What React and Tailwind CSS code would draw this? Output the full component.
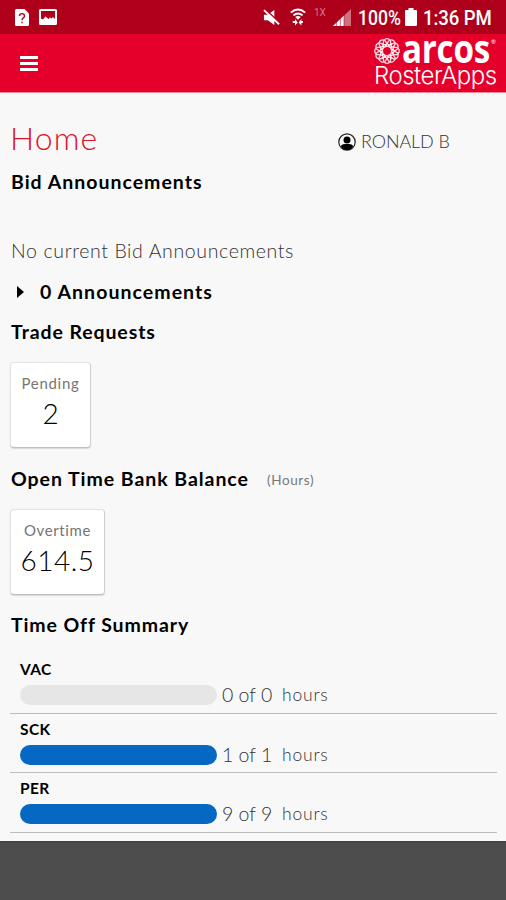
import { useState } from 'react'
import clsx from 'clsx'

const balances = [
  { code: 'VAC', used: 0, total: 0 },
  { code: 'SCK', used: 1, total: 1 },
  { code: 'PER', used: 9, total: 9 },
]

// outer petals of the logo wheel
const petals = [0, 30, 60, 90, 120, 150, 180, 210, 240, 270, 300, 330]

function StatusBar() {
  return (
    <div className="flex h-[34px] shrink-0 items-center bg-[#ae001a] text-white font-['Roboto','Liberation_Sans',sans-serif]">
      <svg className="ml-[15px] h-[17px] w-[14px]" viewBox="0 0 14 17">
        <path fill="#fff" d="M1.5 0H9.5L14 4.5V15.5Q14 17 12.5 17H1.5Q0 17 0 15.5V1.5Q0 0 1.5 0Z" />
        <path fill="none" stroke="#ae001a" strokeWidth="1.4" d="M4.5 7Q4.5 4.6 7 4.6T9.5 7Q9.5 8.3 8 9.2Q7 9.9 7 11.3M7 12.7V14.3" />
      </svg>
      <svg className="ml-[10px] h-[16px] w-[18px]" viewBox="0 0 18 16">
        <rect width="18" height="16" rx="1.5" fill="#fff" />
        <path fill="#ae001a" d="M2 2H16V10L14 8L12.5 9.5L11 8.5L9.5 10L6.5 7.5L4 10.5L2 9.5Z" />
      </svg>

      <div className="ml-auto flex items-center">
        <svg className="h-[17px] w-[17px]" viewBox="0 0 18 18">
          <path fill="#fff" d="M1 6H5L12 1V17L5 12H1Z" />
          <path stroke="#ae001a" strokeWidth="1.6" d="M2.5 .5L18 14.5" />
          <path stroke="#fff" strokeWidth="2" d="M1 1.2L17 16.2" />
        </svg>
        <svg className="ml-[10px] h-[18px] w-[16px]" viewBox="0 0 16 18" fill="none" stroke="#fff" strokeWidth="1.9">
          <path d="M.8 4.6Q8-1.8 15.2 4.6M3.4 7.4Q8 3.4 12.6 7.4" />
          <path fill="#fff" stroke="none" d="M5.2 9Q8 6.8 10.8 9L8 11.8ZM2.7 13H5V11L7.8 14.5L5 17.5V15H2.7ZM13 13V15H11.4V17.5L8.6 14.5L11.4 11V13Z" />
        </svg>
        <span className="ml-[8px] w-[12px] -translate-y-[4px] text-[10px] leading-none text-[#d87583]">1X</span>
        <svg className="ml-[7px] h-[17px] w-[18px]" viewBox="0 0 18 17">
          <path fill="#d0707d" d="M18 0V17H0Z" />
          <path fill="#fff" d="M11 6.6V17H0Z" />
          <path stroke="#ae001a" strokeWidth=".6" d="M3.6 10V17M7.3 7V17M11 4V17" />
        </svg>
        <span className="ml-[7px] w-[46px] origin-left translate-y-[1px] scale-x-[0.88] whitespace-nowrap text-[20px] leading-none font-medium">100%</span>
        <svg className="ml-[1px] h-[18px] w-[12px]" viewBox="0 0 12 18">
          <path fill="#fff" d="M3.5 0H8.5V2H11Q12 2 12 3V17Q12 18 11 18H1Q0 18 0 17V3Q0 2 1 2H3.5Z" />
        </svg>
        <span className="mr-[13px] ml-[6px] w-[70px] origin-left translate-y-[1px] scale-x-[0.93] whitespace-nowrap text-[20px] leading-none font-medium tracking-[-0.1px]">1:36 PM</span>
      </div>
    </div>
  )
}

function Logo() {
  return (
    <div className="mr-[8px] w-[124px] text-white">
      <div className="flex h-[26px] items-center">
        <svg className="h-[26px] w-[26px] shrink-0" viewBox="-13 -13 26 26" fill="none" stroke="#fff" strokeOpacity=".85">
          {petals.map((a) => (
            <g key={a} transform={`rotate(${a})`}>
              <path strokeWidth="1.3" d="M-2.6-11.2Q0-13.4 2.6-11.2L0-7.6Z" />
              <path strokeWidth="1.3" d="M0-7.6L2.6-5.2L0-4.4L-1.6-6Z" />
            </g>
          ))}
        </svg>
        <span className="ml-[2px] w-[88px] origin-left -translate-y-[3px] scale-x-[0.84] whitespace-nowrap font-['Open_Sans','Noto_Sans',sans-serif] text-[39.5px] leading-[26px] font-bold tracking-[-0.3px]">
          arcos
        </span>
        <span className="ml-[1px] -translate-y-[9px] text-[6px] leading-none">®</span>
      </div>
      <div className="whitespace-nowrap font-['Inter','Liberation_Sans',sans-serif] text-[24px] leading-[24px] font-light tracking-[-0.5px]">
        RosterApps
      </div>
    </div>
  )
}

function Header() {
  return (
    <header className="flex h-[59px] shrink-0 items-center justify-between border-b border-[#f28a9a] bg-[#e4002b]">
      <button className="ml-[20px] flex w-[18px] flex-col gap-[3px]" aria-label="Menu">
        <span className="h-[3px] bg-white" />
        <span className="h-[3px] bg-white" />
        <span className="h-[3px] bg-white" />
      </button>
      <Logo />
    </header>
  )
}

function StatCard({ label, value, className, labelClass, valueClass }) {
  return (
    <div className={clsx('flex h-[86px] flex-col items-center rounded-[4px] border border-[#e2e2e2] border-r-[#cfcfcf] border-b-[#bdbdbd] bg-white pt-[9px] shadow-[0_1px_1px_#d8d8d8]', className)}>
      <span className={clsx('text-[15px] leading-[22px] whitespace-nowrap text-[#757575]', labelClass)}>{label}</span>
      <span className={clsx('text-[28px] leading-[38px] font-light whitespace-nowrap text-black', valueClass)}>{value}</span>
    </div>
  )
}

function BalanceRow({ code, used, total }) {
  return (
    <div className="h-[59.5px] border-b border-[#bcbcbc] pt-[7px] pl-[10px]">
      <div className="text-[15.5px] leading-[17px] font-bold tracking-[0.4px]">{code}</div>
      <div className="mt-[7px] flex h-[20px] items-center">
        <div className={clsx('h-[20px] w-[197px] rounded-full', total > 0 ? 'bg-[#0568c2]' : 'bg-[#e6e6e6]')} />
        <span className="ml-[5px] w-[60px] text-[19.5px] leading-[20px] font-light whitespace-nowrap text-[#333]">
          {used} of {total}
        </span>
        <span className="text-[17.5px] leading-[22px] font-light tracking-[0.8px] text-[#333]">hours</span>
      </div>
    </div>
  )
}

export default function App() {
  const [open, setOpen] = useState(false)

  return (
    <div className="flex h-[900px] w-[506px] flex-col overflow-hidden bg-[#f8f8f8] font-['Lato','Open_Sans',sans-serif] text-black">
      <StatusBar />
      <Header />

      <main className="h-[748px] shrink-0 pt-5 pr-[9px] pl-[10px]">
        {/* Title and user */}
        <div className="flex h-[49px] items-center">
          <h1 className="w-[328px] text-[32px] font-light tracking-[1.1px] text-[#dc1428]">Home</h1>
          <svg className="mt-[8px] h-[18px] w-[18px]" viewBox="0 0 18 18">
            <circle cx="9" cy="9" r="8.2" fill="none" stroke="#222" strokeWidth="1.2" />
            <circle cx="9" cy="6.9" r="3.5" fill="#000" />
            <path fill="#000" d="M2.8 13Q4 11 7 11H11Q14 11 15.2 13Q13 16.9 9 16.9T2.8 13Z" />
          </svg>
          <span className="mt-[8px] ml-[5px] text-[18px] font-light tracking-[-0.1px] whitespace-nowrap text-[#333]">RONALD B</span>
        </div>

        <h2 className="pl-px text-[19.5px] leading-[40px] font-bold tracking-[1px]">Bid Announcements</h2>
        <p className="mt-[29px] pl-px text-[19.5px] leading-[40px] font-light tracking-[0.63px] text-[#333]">No current Bid Announcements</p>

        <button className="flex h-[42px] items-center" onClick={() => setOpen(!open)}>
          <svg className={clsx('ml-[7px] h-[12px] w-[7px]', open && 'rotate-90')} viewBox="0 0 7 12">
            <path d="M0 0L7 6L0 12Z" />
          </svg>
          <span className="ml-[16px] text-[19.5px] font-bold tracking-[1.05px]">0 Announcements</span>
        </button>

        <h2 className="mt-px pl-px text-[19.5px] leading-[36px] font-bold tracking-[0.9px]">Trade Requests</h2>
        <StatCard label="Pending" value="2" className="mt-[12px] w-[81px]" labelClass="tracking-[0.7px]" />

        <div className="flex h-[61px] items-center">
          <h2 className="w-[257px] pl-px text-[19.5px] font-bold tracking-[0.95px] whitespace-nowrap">Open Time Bank Balance</h2>
          <span className="mt-[4px] text-[13.5px] tracking-[0.6px] text-[#777]">(Hours)</span>
        </div>
        <StatCard label="Overtime" value="614.5" className="w-[95px]" labelClass="tracking-[0.6px]" valueClass="tracking-[0.5px]" />

        <h2 className="pl-px text-[19.5px] leading-[59px] font-bold tracking-[0.9px]">Time Off Summary</h2>
        {balances.map((b) => (
          <BalanceRow key={b.code} {...b} />
        ))}
      </main>

      <footer className="flex-1 border-t-2 border-[#444] bg-[#4d4d4d]" />
    </div>
  )
}
